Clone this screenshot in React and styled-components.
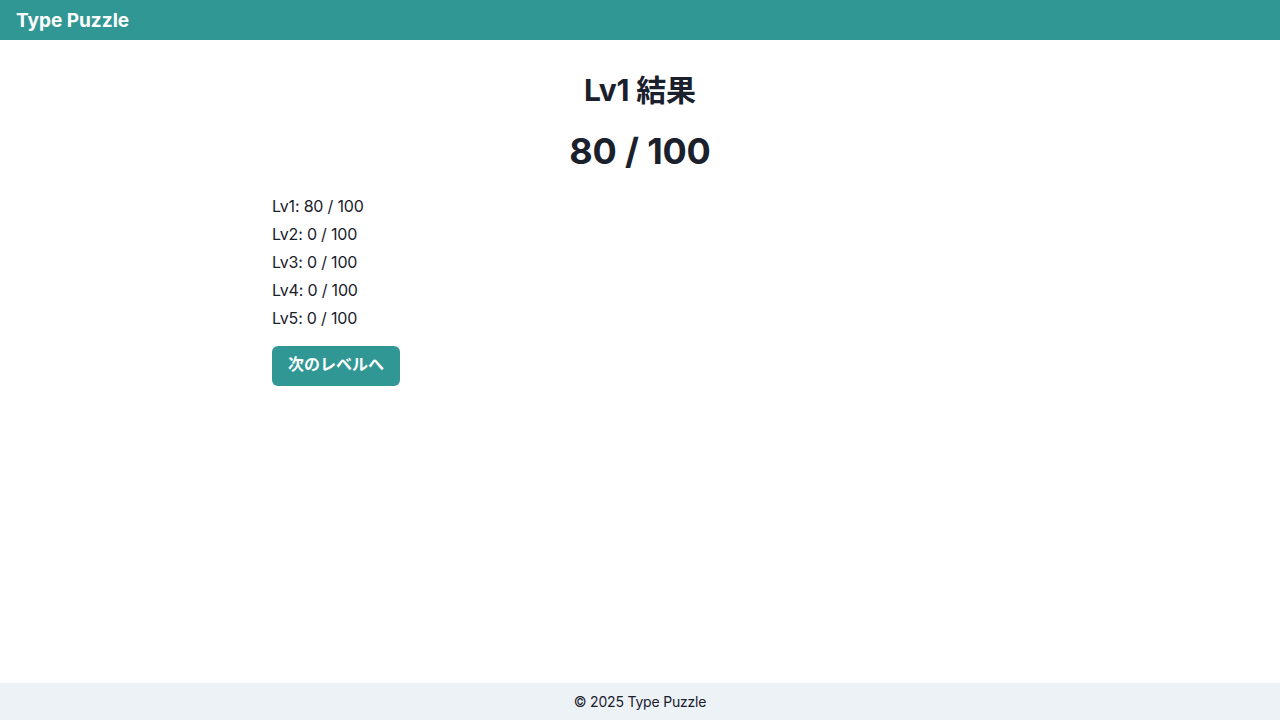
import React from 'react'
import styled, { createGlobalStyle } from 'styled-components'

const GlobalStyle = createGlobalStyle`
  html, body {
    margin: 0;
    padding: 0;
    height: 100%;
  }
  body {
    font-family: Inter, "Noto Sans CJK JP", sans-serif;
    color: #1a202c;
    background: #ffffff;
    letter-spacing: -0.012em;
  }
  #root {
    min-height: 100vh;
    display: flex;
    flex-direction: column;
  }
`

const Header = styled.header`
  height: 40px;
  background: #319795;
  display: flex;
  align-items: center;
  padding: 0 16px;
`

const Logo = styled.div`
  color: #ffffff;
  font-size: 19px;
  font-weight: 700;
  letter-spacing: 0;
`

const Main = styled.main`
  flex: 1;
  width: 100%;
  max-width: 768px;
  margin: 0 auto;
  padding: 32px 16px;
  box-sizing: border-box;
`

const Heading = styled.h2`
  margin: 0;
  text-align: center;
  font-size: ${p => p.$size}px;
  font-weight: 700;
  line-height: 1.2;
  margin-bottom: ${p => p.$gap || 0}px;
`

const ScoreList = styled.div`
  display: flex;
  flex-direction: column;
  gap: 4px;
`

const ScoreRow = styled.p`
  margin: 0;
  font-size: 16px;
  line-height: 24px;
`

const NextButton = styled.button`
  margin-top: 16px;
  height: 40px;
  padding: 0 16px 3px;
  border: none;
  border-radius: 6px;
  background: #319795;
  color: #ffffff;
  font-family: Inter, "Noto Sans CJK JP", sans-serif;
  font-size: 16px;
  font-weight: 600;
  line-height: 1.2;
  letter-spacing: 0;
  cursor: pointer;
`

const Footer = styled.footer`
  height: 37px;
  background: #edf2f7;
  display: flex;
  align-items: center;
  justify-content: center;
  font-size: 14px;
`

const scores = [80, 0, 0, 0, 0]

export default function App() {
  return (
    <>
      <GlobalStyle />
      <Header>
        <Logo>Type Puzzle</Logo>
      </Header>
      <Main>
        <Heading $size={30} $gap={22}>Lv1 結果</Heading>
        <Heading $size={36} $gap={21}>80 / 100</Heading>
        <ScoreList>
          {scores.map((s, i) => (
            <ScoreRow key={i}>Lv{i + 1}: {s} / 100</ScoreRow>
          ))}
        </ScoreList>
        <NextButton>次のレベルへ</NextButton>
      </Main>
      <Footer>© 2025 Type Puzzle</Footer>
    </>
  )
}
